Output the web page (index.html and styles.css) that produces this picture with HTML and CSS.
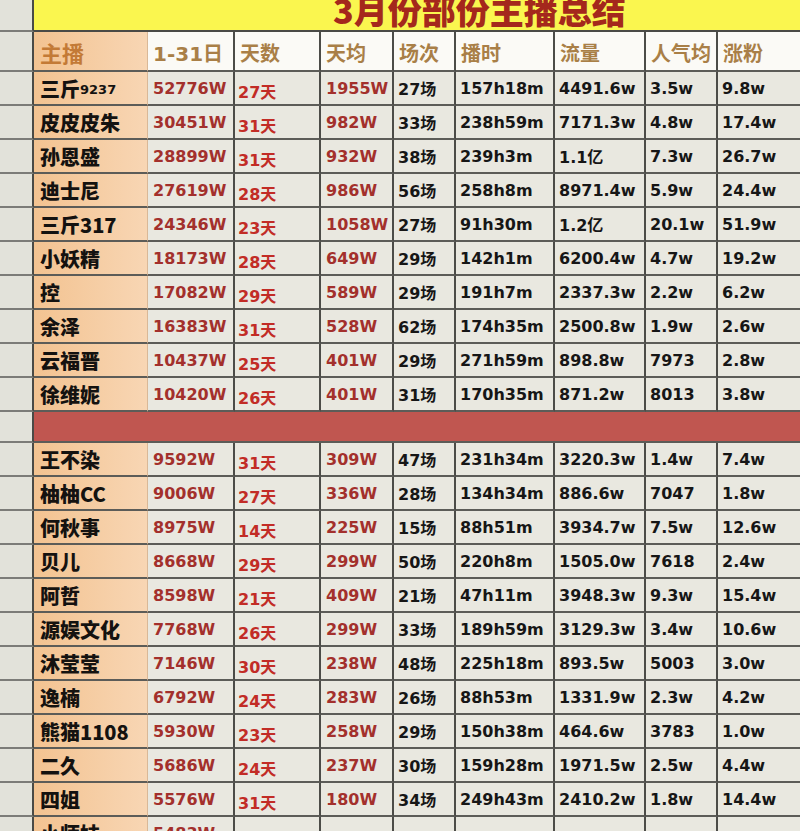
FILE: index.html
```html
<!DOCTYPE html>
<html lang="zh-CN">
<head>
<meta charset="utf-8">
<title>3月份部份主播总结</title>
<link rel="stylesheet" href="styles.css">
</head>
<body>
<div class="sheet">
  <div class="row title-row">
    <div class="gut"></div>
    <div class="title-cell"><div class="title">3月份部份主播总结</div></div>
  </div>
  <div class="row head-row">
    <div class="gut"></div>
    <div class="c name hname">主播</div>
    <div class="c h">1-31日</div>
    <div class="c h">天数</div>
    <div class="c h">天均</div>
    <div class="c h">场次</div>
    <div class="c h">播时</div>
    <div class="c h">流量</div>
    <div class="c h">人气均</div>
    <div class="c h">涨粉</div>
  </div>

  <div class="row"><div class="gut"></div><div class="c name">三斤<span class="sm">9237</span></div><div class="c r1">52776W</div><div class="c r2">27天</div><div class="c r1">1955W</div><div class="c k">27场</div><div class="c k">157h18m</div><div class="c k">4491.6w</div><div class="c k">3.5w</div><div class="c k">9.8w</div></div>
  <div class="row"><div class="gut"></div><div class="c name">皮皮皮朱</div><div class="c r1">30451W</div><div class="c r2">31天</div><div class="c r1">982W</div><div class="c k">33场</div><div class="c k">238h59m</div><div class="c k">7171.3w</div><div class="c k">4.8w</div><div class="c k">17.4w</div></div>
  <div class="row"><div class="gut"></div><div class="c name">孙恩盛</div><div class="c r1">28899W</div><div class="c r2">31天</div><div class="c r1">932W</div><div class="c k">38场</div><div class="c k">239h3m</div><div class="c k">1.1亿</div><div class="c k">7.3w</div><div class="c k">26.7w</div></div>
  <div class="row"><div class="gut"></div><div class="c name">迪士尼</div><div class="c r1">27619W</div><div class="c r2">28天</div><div class="c r1">986W</div><div class="c k">56场</div><div class="c k">258h8m</div><div class="c k">8971.4w</div><div class="c k">5.9w</div><div class="c k">24.4w</div></div>
  <div class="row"><div class="gut"></div><div class="c name">三斤317</div><div class="c r1">24346W</div><div class="c r2">23天</div><div class="c r1">1058W</div><div class="c k">27场</div><div class="c k">91h30m</div><div class="c k">1.2亿</div><div class="c k">20.1w</div><div class="c k">51.9w</div></div>
  <div class="row"><div class="gut"></div><div class="c name">小妖精</div><div class="c r1">18173W</div><div class="c r2">28天</div><div class="c r1">649W</div><div class="c k">29场</div><div class="c k">142h1m</div><div class="c k">6200.4w</div><div class="c k">4.7w</div><div class="c k">19.2w</div></div>
  <div class="row"><div class="gut"></div><div class="c name">控</div><div class="c r1">17082W</div><div class="c r2">29天</div><div class="c r1">589W</div><div class="c k">29场</div><div class="c k">191h7m</div><div class="c k">2337.3w</div><div class="c k">2.2w</div><div class="c k">6.2w</div></div>
  <div class="row"><div class="gut"></div><div class="c name">余泽</div><div class="c r1">16383W</div><div class="c r2">31天</div><div class="c r1">528W</div><div class="c k">62场</div><div class="c k">174h35m</div><div class="c k">2500.8w</div><div class="c k">1.9w</div><div class="c k">2.6w</div></div>
  <div class="row"><div class="gut"></div><div class="c name">云福晋</div><div class="c r1">10437W</div><div class="c r2">25天</div><div class="c r1">401W</div><div class="c k">29场</div><div class="c k">271h59m</div><div class="c k">898.8w</div><div class="c k">7973</div><div class="c k">2.8w</div></div>
  <div class="row"><div class="gut"></div><div class="c name">徐维妮</div><div class="c r1">10420W</div><div class="c r2">26天</div><div class="c r1">401W</div><div class="c k">31场</div><div class="c k">170h35m</div><div class="c k">871.2w</div><div class="c k">8013</div><div class="c k">3.8w</div></div>

  <div class="row sep-row"><div class="gut"></div><div class="sep"></div></div>

  <div class="row"><div class="gut"></div><div class="c name">王不染</div><div class="c r1">9592W</div><div class="c r2">31天</div><div class="c r1">309W</div><div class="c k">47场</div><div class="c k">231h34m</div><div class="c k">3220.3w</div><div class="c k">1.4w</div><div class="c k">7.4w</div></div>
  <div class="row"><div class="gut"></div><div class="c name">柚柚CC</div><div class="c r1">9006W</div><div class="c r2">27天</div><div class="c r1">336W</div><div class="c k">28场</div><div class="c k">134h34m</div><div class="c k">886.6w</div><div class="c k">7047</div><div class="c k">1.8w</div></div>
  <div class="row"><div class="gut"></div><div class="c name">何秋事</div><div class="c r1">8975W</div><div class="c r2">14天</div><div class="c r1">225W</div><div class="c k">15场</div><div class="c k">88h51m</div><div class="c k">3934.7w</div><div class="c k">7.5w</div><div class="c k">12.6w</div></div>
  <div class="row"><div class="gut"></div><div class="c name">贝儿</div><div class="c r1">8668W</div><div class="c r2">29天</div><div class="c r1">299W</div><div class="c k">50场</div><div class="c k">220h8m</div><div class="c k">1505.0w</div><div class="c k">7618</div><div class="c k">2.4w</div></div>
  <div class="row"><div class="gut"></div><div class="c name">阿哲</div><div class="c r1">8598W</div><div class="c r2">21天</div><div class="c r1">409W</div><div class="c k">21场</div><div class="c k">47h11m</div><div class="c k">3948.3w</div><div class="c k">9.3w</div><div class="c k">15.4w</div></div>
  <div class="row"><div class="gut"></div><div class="c name">源娱文化</div><div class="c r1">7768W</div><div class="c r2">26天</div><div class="c r1">299W</div><div class="c k">33场</div><div class="c k">189h59m</div><div class="c k">3129.3w</div><div class="c k">3.4w</div><div class="c k">10.6w</div></div>
  <div class="row"><div class="gut"></div><div class="c name">沐莹莹</div><div class="c r1">7146W</div><div class="c r2">30天</div><div class="c r1">238W</div><div class="c k">48场</div><div class="c k">225h18m</div><div class="c k">893.5w</div><div class="c k">5003</div><div class="c k">3.0w</div></div>
  <div class="row"><div class="gut"></div><div class="c name">逸楠</div><div class="c r1">6792W</div><div class="c r2">24天</div><div class="c r1">283W</div><div class="c k">26场</div><div class="c k">88h53m</div><div class="c k">1331.9w</div><div class="c k">2.3w</div><div class="c k">4.2w</div></div>
  <div class="row"><div class="gut"></div><div class="c name">熊猫1108</div><div class="c r1">5930W</div><div class="c r2">23天</div><div class="c r1">258W</div><div class="c k">29场</div><div class="c k">150h38m</div><div class="c k">464.6w</div><div class="c k">3783</div><div class="c k">1.0w</div></div>
  <div class="row"><div class="gut"></div><div class="c name">二久</div><div class="c r1">5686W</div><div class="c r2">24天</div><div class="c r1">237W</div><div class="c k">30场</div><div class="c k">159h28m</div><div class="c k">1971.5w</div><div class="c k">2.5w</div><div class="c k">4.4w</div></div>
  <div class="row"><div class="gut"></div><div class="c name">四姐</div><div class="c r1">5576W</div><div class="c r2">31天</div><div class="c r1">180W</div><div class="c k">34场</div><div class="c k">249h43m</div><div class="c k">2410.2w</div><div class="c k">1.8w</div><div class="c k">14.4w</div></div>
  <div class="row"><div class="gut"></div><div class="c name">小师妹</div><div class="c r1">5483W</div><div class="c r2"></div><div class="c r1"></div><div class="c k"></div><div class="c k"></div><div class="c k"></div><div class="c k"></div><div class="c k"></div></div>
</div>
</body>
</html>
```

FILE: styles.css
```css
html, body {
  margin: 0;
  padding: 0;
  background: #e6e5dd;
}
body {
  width: 800px;
  height: 831px;
  overflow: hidden;
  font-family: "DejaVu Sans", "Noto Sans CJK SC", sans-serif;
  font-weight: bold;
}
.sheet {
  width: 808px;
}
.row {
  display: grid;
  grid-template-columns: 34px 114px 87px 86px 73px 62px 99px 91px 72px 90px;
  height: 34px;
}
.row > div {
  box-sizing: border-box;
  min-width: 0;
}
.gut {
  background: #e2e2da;
  border-right: 2px solid #4a4a46;
  border-bottom: 2px solid #7c7c78;
}
.title-row {
  height: 32px;
}
.title-cell {
  grid-column: 2 / -1;
  background: #faf64f;
  border-bottom: 2px solid #4a4a46;
  overflow: hidden;
  height: 32px;
}
.title {
  margin-top: -9px;
  padding-left: 299px;
  font-family: "Noto Sans CJK SC", sans-serif;
  font-weight: 900;
  font-size: 34px;
  line-height: 38px;
  color: #a4281c;
  letter-spacing: 0;
  white-space: nowrap;
}
.head-row {
  height: 40px;
}
.c {
  display: flex;
  align-items: center;
  padding-left: 4px;
  white-space: nowrap;
  overflow: hidden;
  background: #e9e8e0;
  border-right: 2px solid #4c4c48;
  border-bottom: 2px solid #5c5c58;
  font-size: 16px;
}
.h {
  background: #fbfaf6;
  color: #a97f47;
  font-size: 20px;
  padding-left: 5px;
  padding-top: 2px;
}
.name {
  background: linear-gradient(to right, #f3c391, #f8d6b4);
  border-right: 1px solid #d9b897;
  padding-left: 6px;
  font-family: "Noto Sans CJK SC", sans-serif;
  font-size: 20px;
  font-weight: 900;
  color: #141210;
}
.hname {
  color: #c37a36;
  font-size: 22px;
  font-weight: bold;
  padding-top: 2px;
}
.sm {
  font-family: "DejaVu Sans", sans-serif;
  font-size: 13px;
  font-weight: bold;
  padding-top: 3px;
}
.r1 {
  color: #a3302c;
  padding-left: 5px;
}
.r2 {
  color: #c22c26;
  padding-top: 6px;
  padding-left: 3px;
}
.r2, .k {
  font-size: 16px;
}
.k {
  color: #161616;
}
.sep-row {
  height: 31px;
}
.sep {
  grid-column: 2 / -1;
  background: #c05650;
  border-bottom: 2px solid #5c5c58;
}
```
